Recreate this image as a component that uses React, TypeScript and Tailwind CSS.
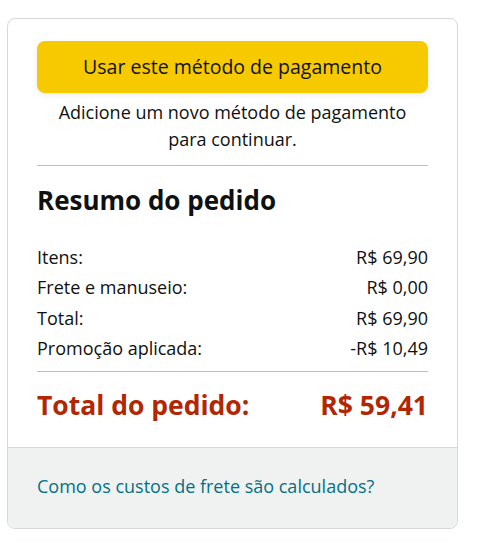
import React from "react";

const rows = [
  { label: "Itens:", value: "R$ 69,90" },
  { label: "Frete e manuseio:", value: "R$ 0,00" },
  { label: "Total:", value: "R$ 69,90" },
  { label: "Promoção aplicada:", value: "-R$ 10,49" },
];

const App = () => {
  return (
    <div className="min-h-[559px] bg-white pt-[18px] pl-[7px] font-['Open_Sans',sans-serif] text-[#0f1111]">
      <div className="w-[451px] overflow-hidden rounded-lg border border-[#d5d9d9]">
        <div className="px-[29px] pt-[22px] pb-[26px]">
          <button
            type="button"
            className="h-[52px] w-full rounded-lg bg-[#f7ca00] text-[19.5px] text-[#0f1111] shadow-[0_2px_5px_rgba(213,217,217,0.5)]"
          >
            Usar este método de pagamento
          </button>
          <p className="mt-[6px] text-center text-[18px] leading-[27px]">
            Adicione um novo método de pagamento
            <br />
            para continuar.
          </p>
          <hr className="mt-[12px] border-t border-[#bbbfbf]" />

          <h2 className="mt-[18px] text-[26px] font-bold leading-[32px]">
            Resumo do pedido
          </h2>
          <div className="mt-[26px] flex flex-col">
            {rows.map((r) => (
              <div
                key={r.label}
                className="flex h-[30.5px] items-center justify-between text-[18px]"
              >
                <span>{r.label}</span>
                <span>{r.value}</span>
              </div>
            ))}
          </div>
          <hr className="mt-[7px] border-t border-[#bbbfbf]" />
          <div className="mt-[17px] flex items-center justify-between text-[26.5px] font-bold leading-[32px] text-[#b12704]">
            <span>Total do pedido:</span>
            <span>R$ 59,41</span>
          </div>
        </div>
        <div className="border-t border-[#d5d9d9] bg-[#f0f2f2] px-[29px] pt-[26px] pb-[30px]">
          <a href="#" className="block text-[18px] leading-[24px] text-[#007185]">
            Como os custos de frete são calculados?
          </a>
        </div>
      </div>
    </div>
  );
};

export default App;
